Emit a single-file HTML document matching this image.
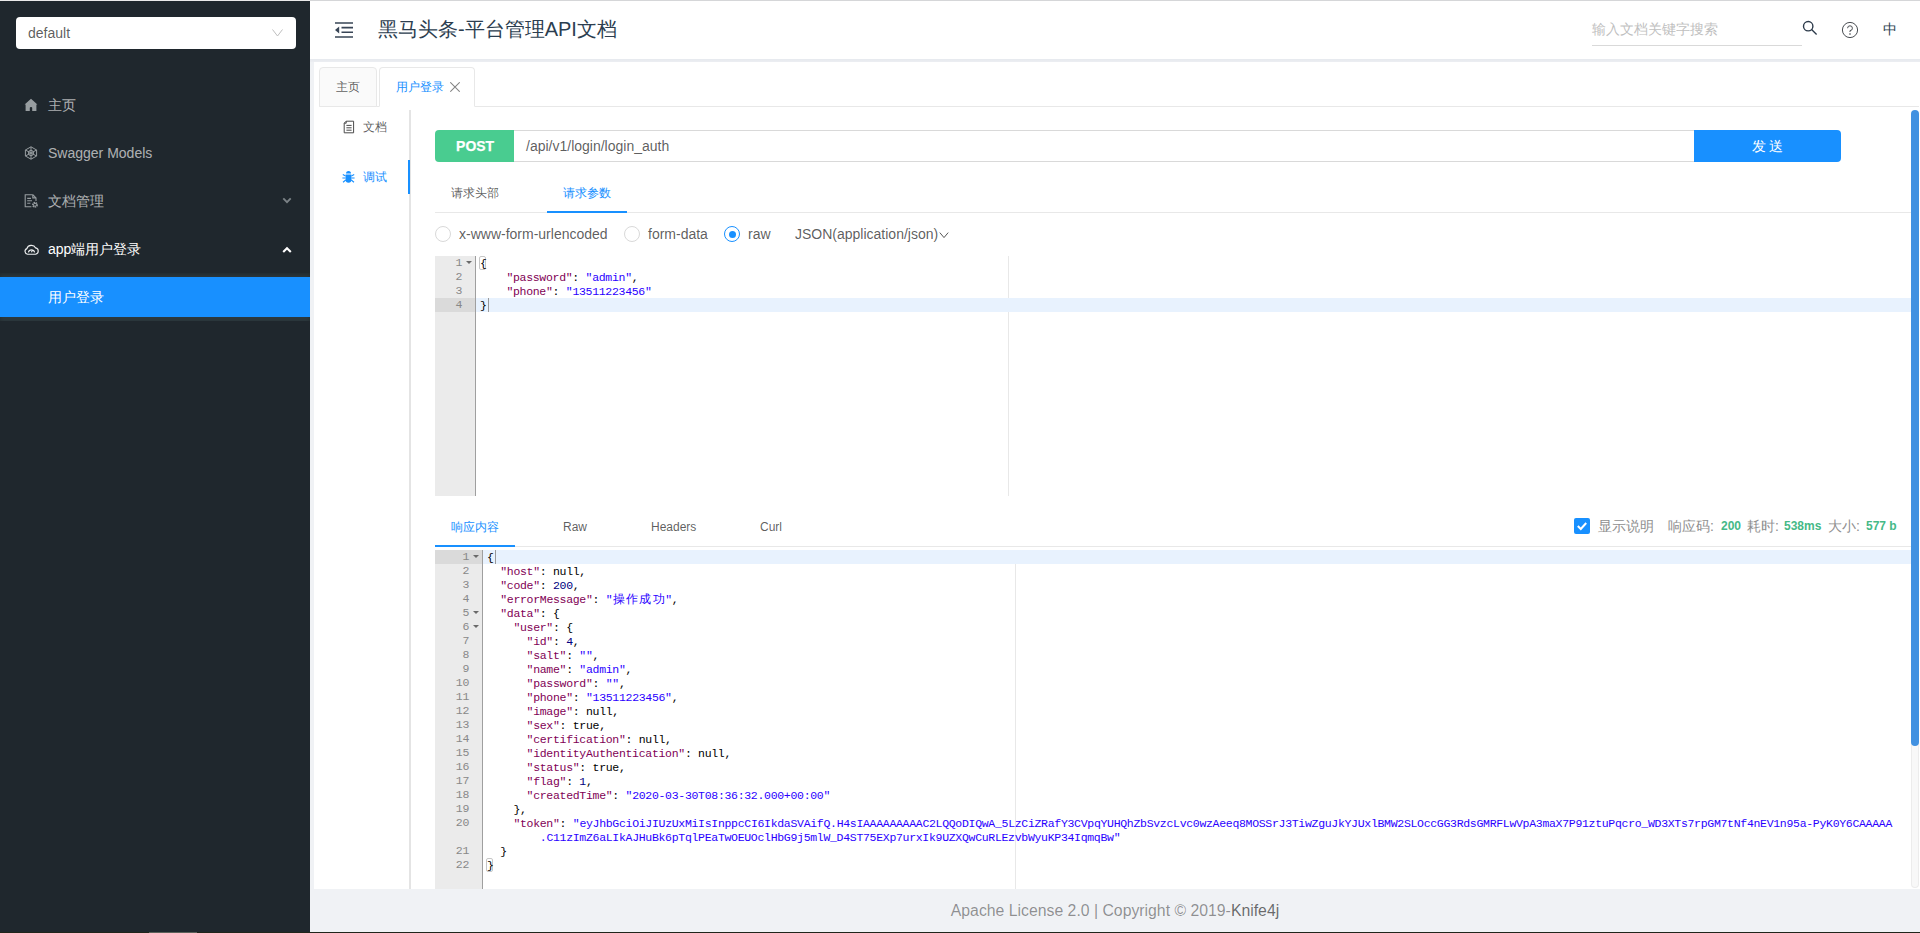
<!DOCTYPE html>
<html lang="zh">
<head>
<meta charset="utf-8">
<title>Knife4j</title>
<style>
*{box-sizing:border-box;margin:0;padding:0}
html,body{width:1920px;height:933px;overflow:hidden;background:#f0f2f5}
body{position:relative;font-family:"Liberation Sans",sans-serif;font-size:14px;color:rgba(0,0,0,.65);line-height:1.5}
.abs{position:absolute}
svg{display:block}
/* ---------- sidebar ---------- */
#side{position:absolute;left:0;top:0;width:310px;height:932px;background:#1f272d}
#sel{position:absolute;left:16px;top:17px;width:280px;height:32px;background:#fff;border-radius:4px;color:rgba(0,0,0,.65);font-size:14px;line-height:32px;padding-left:12px}
#sel svg{position:absolute;right:13px;top:10px}
.mi{position:absolute;left:0;width:310px;height:40px;line-height:40px;color:rgba(255,255,255,.65);font-size:14px;padding-left:48px;white-space:nowrap}
.mi .ic{position:absolute;left:24px;top:13px;width:14px;height:14px}
.mi .ar{position:absolute;left:282px;top:14px;width:10px;height:10px}
#sub{position:absolute;left:0;top:273px;width:310px;height:48px;background:#2c383d;box-shadow:inset 0 2px 4px rgba(0,0,0,.25)}
#subsel{position:absolute;left:0;top:277px;width:310px;height:40px;line-height:40px;background:#1890ff;color:#fff;padding-left:48px;font-size:14px}
/* ---------- header ---------- */
#topline{position:absolute;left:0;top:0;width:1920px;height:1px;background:linear-gradient(90deg,#eaeaea 0,#eaeaea 310px,#d5d6d8 310px);z-index:9}
#hdr{position:absolute;left:310px;top:0;width:1610px;height:59px;background:#fff}
#band{position:absolute;left:310px;top:59px;width:1610px;height:3px;background:linear-gradient(#e6e9ee,#eceef2)}
#title{position:absolute;left:378px;top:14px;font-size:20px;line-height:30px;color:#2c3e50;white-space:nowrap}
#search{position:absolute;left:1592px;top:18px;width:210px;height:28px;border-bottom:1px solid #d9d9d9;font-size:14px;line-height:22px;color:#bfbfbf;white-space:nowrap}
#zh{position:absolute;left:1882.6px;top:18px;font-size:14px;line-height:22px;color:#2c3e50}
/* ---------- panel ---------- */
#panel{position:absolute;left:314px;top:62px;width:1606px;height:827px;background:#fff}
#tabline{position:absolute;left:319px;top:106px;width:1600px;height:1px;background:#e8e8e8}
.tab{position:absolute;top:67px;height:40px;border:1px solid #e8e8e8;border-radius:4px 4px 0 0;font-size:12px;line-height:38px;padding:0 16px;white-space:nowrap}
#tab1{left:319px;width:58px;background:#fafafa;color:rgba(0,0,0,.65)}
#tab2{left:379px;width:96px;background:#fff;color:#1890ff;border-bottom-color:#fff}
#tab2 svg{position:absolute;left:70px;top:14px}
#vline{position:absolute;left:409px;top:110px;width:2px;height:779px;background:#e4e4e4}
#vink{position:absolute;left:408px;top:160px;width:2px;height:34px;background:#1890ff}
.vt{position:absolute;left:363px;font-size:12px;line-height:18px;white-space:nowrap}
/* ---------- request line ---------- */
#post{position:absolute;left:435px;top:130px;width:79px;height:32px;background:#49cc90;border-radius:4px 0 0 4px;color:#fff;font-weight:bold;font-size:15.5px;line-height:32px;text-align:center;padding-left:2px;-webkit-text-stroke:.25px #fff}
#post span{display:inline-block;transform:scaleX(.9)}
#url{position:absolute;left:514px;top:130px;width:1180px;height:32px;border-top:1px solid #d9d9d9;border-bottom:1px solid #d9d9d9;background:#fff;font-size:14px;line-height:30px;padding-left:12px;color:rgba(0,0,0,.65)}
#send{position:absolute;left:1694px;top:130px;width:147px;height:32px;background:#1890ff;border-radius:0 4px 4px 0;color:#fff;font-size:14px;line-height:32px;text-align:center}
.hline{position:absolute;left:435px;width:1476px;height:1px;background:#e8e8e8}
.ht{position:absolute;font-size:12px;line-height:18px;white-space:nowrap;color:rgba(0,0,0,.65)}
.ink{position:absolute;height:2px;background:#1890ff}
.radio{position:absolute;top:226px;width:16px;height:16px;border:1px solid #d9d9d9;border-radius:50%;background:#fff}
.radio.on{border-color:#1890ff}
.radio.on:after{content:"";position:absolute;left:3.5px;top:3.5px;width:7px;height:7px;border-radius:50%;background:#1890ff}
.rl{position:absolute;top:223px;font-size:14px;line-height:22px;white-space:nowrap;color:rgba(0,0,0,.65)}
/* ---------- ace ---------- */
.ace{position:absolute;left:435px;width:1476px;background:#fff;overflow:hidden;font-family:"Liberation Mono",monospace;font-size:11.5px;letter-spacing:-.305px;line-height:14px;color:#000}
.ln u{display:inline-block;width:13.19px;text-align:center;text-decoration:none;font-size:12px;letter-spacing:0;line-height:14px;vertical-align:top}
.brk{position:absolute;width:7.6px;height:14px;border:1px solid #c6c6c6;border-radius:2px}
.gut{position:absolute;left:0;top:0;height:100%;background:#ebebeb;border-right:1px solid #9f9f9f;color:#888}
.gl{position:absolute;left:0;width:100%;height:14px}
.gl b{position:absolute;font-weight:normal;text-align:right}
.gl i{position:absolute;width:0;height:0;border-left:3px solid transparent;border-right:3px solid transparent;border-top:3.5px solid #6a6a6a;top:5px}
.act{position:absolute;height:14px;background:#e8f2fe}
.gact{position:absolute;left:0;height:14px;background:#dadada}
.pm{position:absolute;top:0;width:1px;height:100%;background:#e8e8e8}
.ln{position:absolute;white-space:pre;height:14px}
.k{color:#7f0055}.s{color:#2a00ff}.n{color:#000080}
.cur{position:absolute;width:1px;height:14px;background:#999}
/* ---------- footer ---------- */
#foot{position:absolute;left:310px;top:889px;width:1610px;height:43px;background:#f0f2f5;text-align:center;font-size:15.8px;line-height:44px;color:rgba(0,0,0,.42);white-space:nowrap}
#foot span{color:rgba(0,0,0,.58)}
#bot{position:absolute;left:0;top:932px;width:1920px;height:1px;background:#20251b}
#bot2{position:absolute;left:149px;top:932px;width:48px;height:1px;background:#5c615a}
#sbthumb{position:absolute;left:1911px;top:110px;width:8px;height:636px;border-radius:4px;background:#4191e1}
#sbtrack{position:absolute;left:1911px;top:742px;width:8px;height:146px;border-radius:0 0 4px 4px;background:#f8f8f8;border:1px solid #ececec;border-top:0}
</style>
</head>
<body>
<div id="side">
 <div id="sel">default<svg width="11" height="11" viewBox="0 0 11 11"><path d="M0.5 2.5 L5.5 9 L10.5 2.5" fill="none" stroke="#bfbfbf" stroke-width="1"/></svg></div>
 <div class="mi" style="top:85px"><svg class="ic" viewBox="0 0 14 14"><path d="M7 .8 L13.4 6.6 H12.4 V13 H1.6 V6.6 H.6 Z M5.8 9.8 V13 H8.2 V9.8 Q8.2 9 7 9 Q5.8 9 5.8 9.8 Z" fill="#979da0" fill-rule="evenodd"/></svg>主页</div>
 <div class="mi" style="top:133px"><svg class="ic" viewBox="0 0 14 14"><path d="M7 .8 L12.6 4 V10 L7 13.2 L1.4 10 V4 Z M7 .8 V13.2 M1.4 4 L12.6 10 M12.6 4 L1.4 10" fill="none" stroke="#979da0" stroke-width="1"/><circle cx="7" cy="7" r="2.6" fill="none" stroke="#979da0" stroke-width="1"/></svg>Swagger Models</div>
 <div class="mi" style="top:181px"><svg class="ic" viewBox="0 0 15 14" style="left:23.5px;width:15px"><path d="M8.8 .7 H1.2 V12.8 H7.4 M8.8 .7 L12 3.9 V7 M8.8 .7 V3.9 H12 M3.2 4.4 H7 M3.2 6.8 H8 M3.2 9.2 H6.4" fill="none" stroke="#979da0" stroke-width="1.1"/><circle cx="11" cy="10.8" r="2.2" fill="none" stroke="#979da0" stroke-width="1.5" stroke-dasharray="1.4 .6"/><circle cx="11" cy="10.8" r="1.5" fill="none" stroke="#979da0" stroke-width=".9"/></svg>文档管理<svg class="ar" viewBox="0 0 10 10"><path d="M1.3 3.4 L5 7.1 L8.7 3.4" fill="none" stroke="#7b8286" stroke-width="1.9"/></svg></div>
 <div class="mi" style="top:229px;color:#fff"><svg class="ic" viewBox="0 0 15 11" style="left:23.5px;top:14.5px;width:15px;height:11px"><path d="M3.6 10.2 A2.9 2.9 0 0 1 2.9 4.6 A4.6 4.1 0 0 1 11.6 3.9 A3.2 3.2 0 0 1 11.6 10.2 Z" fill="none" stroke="#eceeef" stroke-width="1.15"/><path d="M4.4 8.3 A3.2 3.2 0 0 1 10.6 8.3 M7.5 8.2 L8.6 5.6" fill="none" stroke="#eceeef" stroke-width="1.1"/></svg>app端用户登录<svg class="ar" viewBox="0 0 10 10" style="top:16px"><path d="M1.2 7 L5 3.2 L8.8 7" fill="none" stroke="#fff" stroke-width="2.1"/></svg></div>
 <div id="sub"></div>
 <div id="subsel">用户登录</div>
</div>
<div id="hdr"></div>
<div id="band"></div>
<div id="topline"></div>
<svg class="abs" style="left:335px;top:21px" width="18" height="18" viewBox="0 0 18 18"><path d="M0 2 H18 M6.5 6.6 H18 M6.5 11.3 H18 M0 16 H18" stroke="#384556" stroke-width="1.6" fill="none"/><path d="M4.2 5.6 V12.4 L0 9 Z" fill="#384556"/></svg>
<div id="title">黑马头条-平台管理API文档</div>
<div id="search">输入文档关键字搜索</div>
<svg class="abs" style="left:1802px;top:20px" width="16" height="16" viewBox="0 0 16 16"><circle cx="6.2" cy="6.2" r="4.7" fill="none" stroke="#2c3a4a" stroke-width="1.4"/><path d="M9.6 9.6 L14.6 14.6" stroke="#2c3a4a" stroke-width="1.4"/></svg>
<svg class="abs" style="left:1841px;top:21px" width="18" height="18" viewBox="0 0 18 18"><circle cx="9" cy="9" r="7.6" fill="none" stroke="#4a4e53" stroke-width="1"/><path d="M6.6 7.2 A2.4 2.4 0 1 1 9 9.6 V11" fill="none" stroke="#4a4e53" stroke-width="1"/><circle cx="9" cy="13" r=".8" fill="#3a3f45"/></svg>
<div id="zh">中</div>
<div id="panel"></div>
<div id="tabline"></div>
<div class="tab" id="tab1">主页</div>
<div class="tab" id="tab2">用户登录<svg width="10" height="10" viewBox="0 0 10 10"><path d="M.3 .3 L9.7 9.7 M9.7 .3 L.3 9.7" stroke="#858585" stroke-width="1.05" fill="none"/></svg></div>
<div id="vline"></div>
<div id="vink"></div>
<svg class="abs" style="left:343px;top:120px" width="12" height="14" viewBox="0 0 12 14"><path d="M3.2 1.2 H10.6 V12.8 H1.2 V3.2 Z M3.2 1.2 V3.2 H1.2 M3.4 5.4 H8.6 M3.4 7.8 H8.6 M3.4 10.2 H8.6" fill="none" stroke="#4a4a4a" stroke-width="1"/></svg>
<div class="vt" style="top:118px;color:rgba(0,0,0,.65)">文档</div>
<svg class="abs" style="left:342px;top:170px" width="13" height="14" viewBox="0 0 13 14"><path d="M4 3.6 A2.5 2.5 0 0 1 9 3.6 Z" fill="#1890ff"/><path d="M3.6 4.6 H9.4 V9.5 A2.9 3.2 0 0 1 3.6 9.5 Z" fill="#1890ff"/><path d="M3.6 6 L.8 4.6 M3.6 8 H.4 M3.8 10 L1 12.2 M9.4 6 L12.2 4.6 M9.4 8 H12.6 M9.2 10 L12 12.2" stroke="#1890ff" stroke-width="1.1" fill="none"/></svg>
<div class="vt" style="top:168px;color:#1890ff">调试</div>
<div id="post"><span>POST</span></div>
<div id="url">/api/v1/login/login_auth</div>
<div id="send">发 送</div>
<div class="ht" style="left:451px;top:184px">请求头部</div>
<div class="ht" style="left:563px;top:184px;color:#1890ff">请求参数</div>
<div class="hline" style="top:212px"></div>
<div class="ink" style="left:547px;top:211px;width:80px"></div>
<div class="radio" style="left:435px"></div><div class="rl" style="left:459px">x-www-form-urlencoded</div>
<div class="radio" style="left:624px"></div><div class="rl" style="left:648px">form-data</div>
<div class="radio on" style="left:724px"></div><div class="rl" style="left:748px">raw</div>
<div class="rl" style="left:795px">JSON(application/json)</div>
<svg class="abs" style="left:939px;top:230px" width="10" height="10" viewBox="0 0 10 10"><path d="M.8 2.6 L5 7.6 L9.2 2.6" fill="none" stroke="#555" stroke-width="1"/></svg>
<div class="ace" style="top:256px;height:240px">
<div class="pm" style="left:573px"></div>
<div class="act" style="left:41px;top:42px;width:1440px"></div>
<div class="gut" style="width:41px"><div class="gact" style="top:42px;width:40px"></div>
<div class="gl" style="top:0.0px"><b style="right:13px">1</b><i style="left:31px"></i></div>
<div class="gl" style="top:14.0px"><b style="right:13px">2</b></div>
<div class="gl" style="top:28.0px"><b style="right:13px">3</b></div>
<div class="gl" style="top:42.0px"><b style="right:13px">4</b></div>
</div>
<div class="brk" style="left:43.5px;top:0px"></div>
<div class="ln" style="left:45.0px;top:0.7px">{</div>
<div class="ln" style="left:45.0px;top:14.7px">    <span class="k">"password"</span>: <span class="s">"admin"</span>,</div>
<div class="ln" style="left:45.0px;top:28.7px">    <span class="k">"phone"</span>: <span class="s">"13511223456"</span></div>
<div class="ln" style="left:45.0px;top:42.7px">}</div>
<div class="cur" style="left:52.6px;top:42px"></div>
</div>
<div class="ht" style="left:451px;top:518px;color:#1890ff">响应内容</div>
<div class="ht" style="left:563px;top:518px">Raw</div>
<div class="ht" style="left:651px;top:518px">Headers</div>
<div class="ht" style="left:760px;top:518px">Curl</div>
<div class="hline" style="top:546px"></div>
<div class="ink" style="left:435px;top:545px;width:80px"></div>
<div class="abs" style="left:1574px;top:518px;width:16px;height:16px;background:#1890ff;border-radius:2px"><svg width="16" height="16" viewBox="0 0 16 16"><path d="M3.8 8 L6.8 11 L12.2 5" fill="none" stroke="#fff" stroke-width="2"/></svg></div>
<div class="rl" style="left:1598px;top:515px;color:#8f8f8f">显示说明</div>
<div class="rl" style="left:1668px;top:515px;color:#8f8f8f">响应码:</div>
<div class="rl" style="left:1721px;top:515px;font-size:12px;font-weight:bold;color:#45b987">200</div>
<div class="rl" style="left:1747px;top:515px;color:#8f8f8f">耗时:</div>
<div class="rl" style="left:1784px;top:515px;font-size:12px;font-weight:bold;color:#45b987">538ms</div>
<div class="rl" style="left:1828px;top:515px;color:#8f8f8f">大小:</div>
<div class="rl" style="left:1866px;top:515px;font-size:12px;font-weight:bold;color:#45b987">577 b</div>
<div class="ace" style="top:550px;height:339px">
<div class="pm" style="left:580px"></div>
<div class="act" style="left:48px;top:0px;width:1440px"></div>
<div class="gut" style="width:48px"><div class="gact" style="top:0px;width:47px"></div>
<div class="gl" style="top:0.0px"><b style="right:13px">1</b><i style="left:38px"></i></div>
<div class="gl" style="top:14.0px"><b style="right:13px">2</b></div>
<div class="gl" style="top:28.0px"><b style="right:13px">3</b></div>
<div class="gl" style="top:42.0px"><b style="right:13px">4</b></div>
<div class="gl" style="top:56.0px"><b style="right:13px">5</b><i style="left:38px"></i></div>
<div class="gl" style="top:70.0px"><b style="right:13px">6</b><i style="left:38px"></i></div>
<div class="gl" style="top:84.0px"><b style="right:13px">7</b></div>
<div class="gl" style="top:98.0px"><b style="right:13px">8</b></div>
<div class="gl" style="top:112.0px"><b style="right:13px">9</b></div>
<div class="gl" style="top:126.0px"><b style="right:13px">10</b></div>
<div class="gl" style="top:140.0px"><b style="right:13px">11</b></div>
<div class="gl" style="top:154.0px"><b style="right:13px">12</b></div>
<div class="gl" style="top:168.0px"><b style="right:13px">13</b></div>
<div class="gl" style="top:182.0px"><b style="right:13px">14</b></div>
<div class="gl" style="top:196.0px"><b style="right:13px">15</b></div>
<div class="gl" style="top:210.0px"><b style="right:13px">16</b></div>
<div class="gl" style="top:224.0px"><b style="right:13px">17</b></div>
<div class="gl" style="top:238.0px"><b style="right:13px">18</b></div>
<div class="gl" style="top:252.0px"><b style="right:13px">19</b></div>
<div class="gl" style="top:266.0px"><b style="right:13px">20</b></div>
<div class="gl" style="top:294.0px"><b style="right:13px">21</b></div>
<div class="gl" style="top:308.0px"><b style="right:13px">22</b></div>
</div>
<div class="brk" style="left:50.5px;top:308px"></div>
<div class="ln" style="left:52.0px;top:0.7px">{</div>
<div class="ln" style="left:52.0px;top:14.7px">  <span class="k">"host"</span>: null,</div>
<div class="ln" style="left:52.0px;top:28.7px">  <span class="k">"code"</span>: <span class="n">200</span>,</div>
<div class="ln" style="left:52.0px;top:42.7px">  <span class="k">"errorMessage"</span>: <span class="s">"<u>操</u><u>作</u><u>成</u><u>功</u>"</span>,</div>
<div class="ln" style="left:52.0px;top:56.7px">  <span class="k">"data"</span>: {</div>
<div class="ln" style="left:52.0px;top:70.7px">    <span class="k">"user"</span>: {</div>
<div class="ln" style="left:52.0px;top:84.7px">      <span class="k">"id"</span>: <span class="n">4</span>,</div>
<div class="ln" style="left:52.0px;top:98.7px">      <span class="k">"salt"</span>: <span class="s">""</span>,</div>
<div class="ln" style="left:52.0px;top:112.7px">      <span class="k">"name"</span>: <span class="s">"admin"</span>,</div>
<div class="ln" style="left:52.0px;top:126.7px">      <span class="k">"password"</span>: <span class="s">""</span>,</div>
<div class="ln" style="left:52.0px;top:140.7px">      <span class="k">"phone"</span>: <span class="s">"13511223456"</span>,</div>
<div class="ln" style="left:52.0px;top:154.7px">      <span class="k">"image"</span>: null,</div>
<div class="ln" style="left:52.0px;top:168.7px">      <span class="k">"sex"</span>: true,</div>
<div class="ln" style="left:52.0px;top:182.7px">      <span class="k">"certification"</span>: null,</div>
<div class="ln" style="left:52.0px;top:196.7px">      <span class="k">"identityAuthentication"</span>: null,</div>
<div class="ln" style="left:52.0px;top:210.7px">      <span class="k">"status"</span>: true,</div>
<div class="ln" style="left:52.0px;top:224.7px">      <span class="k">"flag"</span>: <span class="n">1</span>,</div>
<div class="ln" style="left:52.0px;top:238.7px">      <span class="k">"createdTime"</span>: <span class="s">"2020-03-30T08:36:32.000+00:00"</span></div>
<div class="ln" style="left:52.0px;top:252.7px">    },</div>
<div class="ln" style="left:52.0px;top:266.7px">    <span class="k">"token"</span>: <span class="s">"eyJhbGciOiJIUzUxMiIsInppcCI6IkdaSVAifQ.H4sIAAAAAAAAAC2LQQoDIQwA_5LzCiZRafY3CVpqYUHQhZbSvzcLvc0wzAeeq8MOSSrJ3TiwZguJkYJUxlBMW2SLOccGG3RdsGMRFLwVpA3maX7P91ztuPqcro_WD3XTs7rpGM7tNf4nEV1n95a-PyK0Y6CAAAAA</span></div>
<div class="ln" style="left:52.0px;top:280.7px">        <span class="s">.C11zImZ6aLIkAJHuBk6pTqlPEaTwOEUOclHbG9j5mlW_D4ST75EXp7urxIk9UZXQwCuRLEzvbWyuKP34IqmqBw"</span></div>
<div class="ln" style="left:52.0px;top:294.7px">  }</div>
<div class="ln" style="left:52.0px;top:308.7px">}</div>
<div class="cur" style="left:59.6px;top:0px"></div>
</div>
<div id="foot">Apache License 2.0 | Copyright © 2019-<span>Knife4j</span></div>
<div id="sbtrack"></div>
<div id="sbthumb"></div>
<div id="bot"></div><div id="bot2"></div>
</body>
</html>
